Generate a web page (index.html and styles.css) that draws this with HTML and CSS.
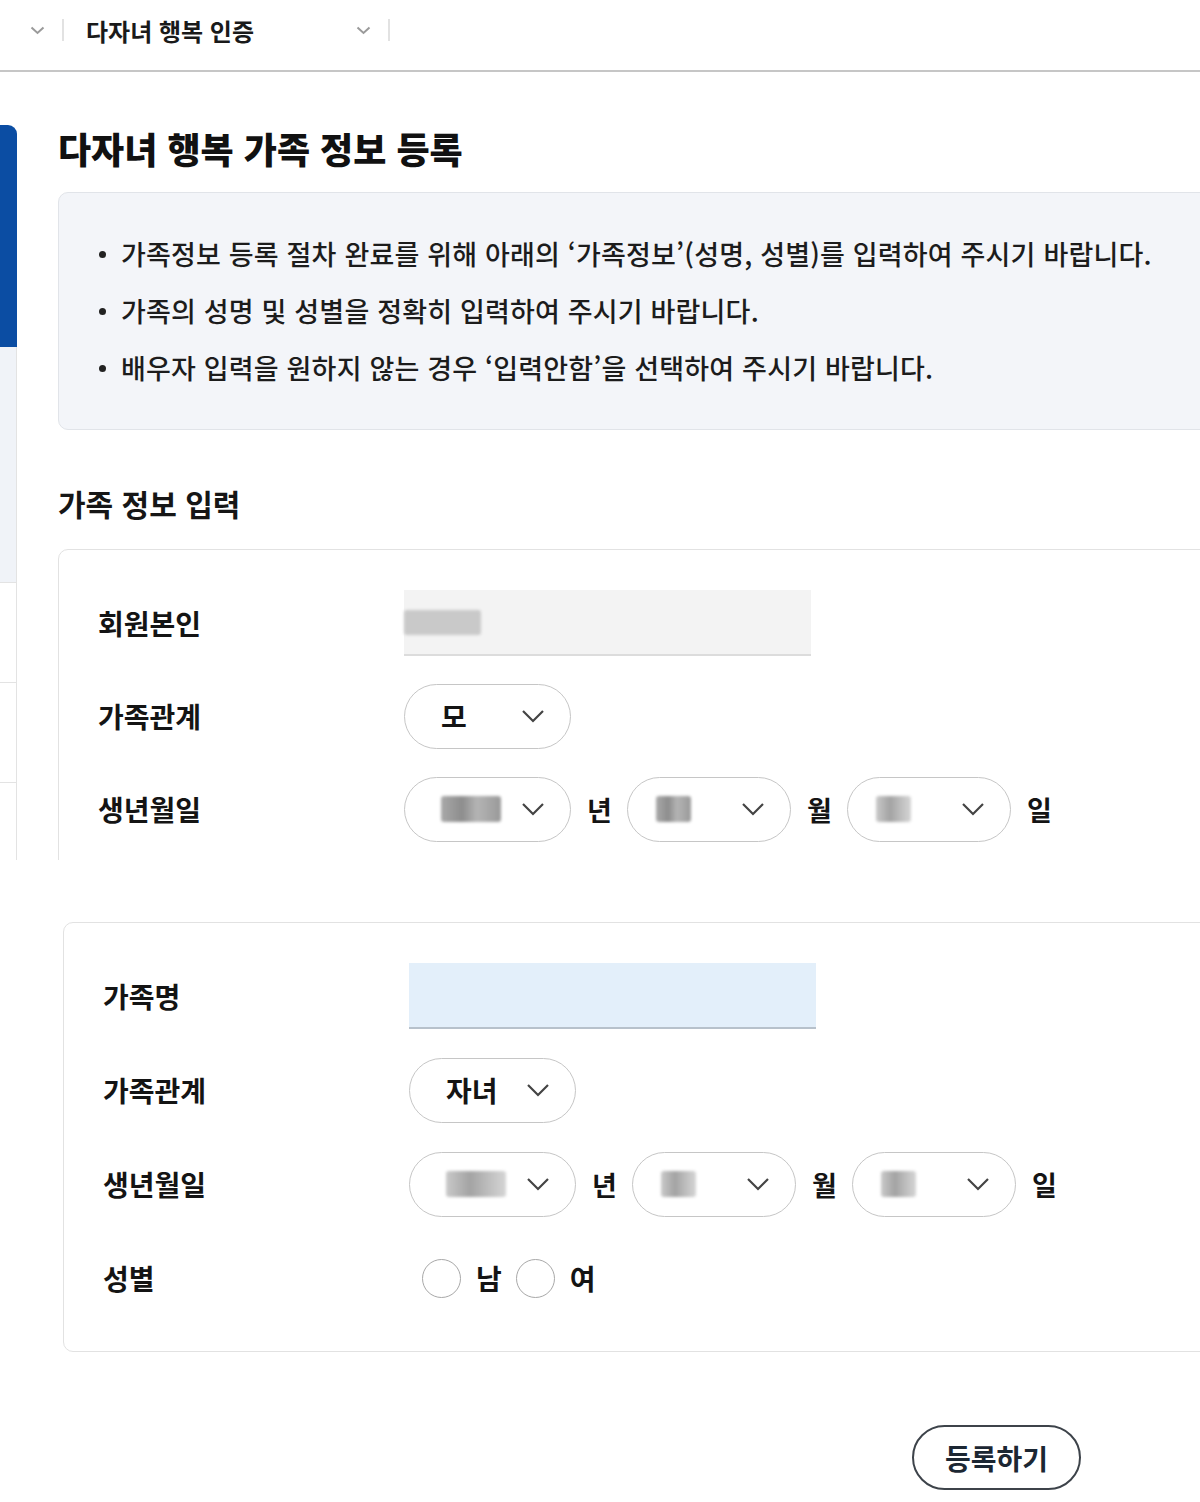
FILE: index.html
```html
<!DOCTYPE html>
<html lang="ko">
<head>
<meta charset="utf-8">
<title>다자녀 행복 가족 정보 등록</title>
<link rel="stylesheet" href="styles.css">
</head>
<body>
<div class="page">
  <div class="top">
    <header class="gnb">
      <span class="gnb-chev"><svg width="15" height="9" viewBox="0 0 15 9"><polyline points="1.5,1.5 7.5,7 13.5,1.5" fill="none" stroke="#9a9a9a" stroke-width="2"/></svg></span>
      <span class="gnb-div"></span>
      <span class="gnb-title">다자녀 행복 인증</span>
      <span class="gnb-chev"><svg width="15" height="9" viewBox="0 0 15 9"><polyline points="1.5,1.5 7.5,7 13.5,1.5" fill="none" stroke="#9a9a9a" stroke-width="2"/></svg></span>
      <span class="gnb-div"></span>
    </header>
    <div class="main">
      <nav class="side">
        <div class="side-gap"></div>
        <div class="side-item active"></div>
        <div class="side-item sub"></div>
        <div class="side-item"></div>
        <div class="side-item"></div>
        <div class="side-item last"></div>
      </nav>
      <section class="content">
        <h1 class="title">다자녀 행복 가족 정보 등록</h1>
        <div class="notice">
          <ul>
            <li>가족정보 등록 절차 완료를 위해 아래의 ‘가족정보’(성명, 성별)를 입력하여 주시기 바랍니다.</li>
            <li>가족의 성명 및 성별을 정확히 입력하여 주시기 바랍니다.</li>
            <li>배우자 입력을 원하지 않는 경우 ‘입력안함’을 선택하여 주시기 바랍니다.</li>
          </ul>
        </div>
        <h2 class="subtitle">가족 정보 입력</h2>
        <div class="card">
          <div class="row">
            <span class="label">회원본인</span>
            <div class="field readonly"><span class="blur name"></span></div>
          </div>
          <div class="row">
            <span class="label">가족관계</span>
            <div class="select"><span class="val">모</span><svg class="chev" width="24" height="14" viewBox="0 0 24 14"><polyline points="2,2 12,12 22,2" fill="none" stroke="#444" stroke-width="2.2"/></svg></div>
          </div>
          <div class="row">
            <span class="label">생년월일</span>
            <div class="date">
              <div class="select"><span class="blur yr"></span><svg class="chev" width="24" height="14" viewBox="0 0 24 14"><polyline points="2,2 12,12 22,2" fill="none" stroke="#444" stroke-width="2.2"/></svg></div>
              <span class="unit">년</span>
              <div class="select narrow"><span class="blur md"></span><svg class="chev" width="24" height="14" viewBox="0 0 24 14"><polyline points="2,2 12,12 22,2" fill="none" stroke="#444" stroke-width="2.2"/></svg></div>
              <span class="unit">월</span>
              <div class="select narrow"><span class="blur md light"></span><svg class="chev" width="24" height="14" viewBox="0 0 24 14"><polyline points="2,2 12,12 22,2" fill="none" stroke="#444" stroke-width="2.2"/></svg></div>
              <span class="unit">일</span>
            </div>
          </div>
        </div>
      </section>
    </div>
  </div>

  <div class="bottom">
    <div class="card">
      <div class="row">
        <span class="label">가족명</span>
        <div class="field active"></div>
      </div>
      <div class="row">
        <span class="label">가족관계</span>
        <div class="select"><span class="val">자녀</span><svg class="chev" width="24" height="14" viewBox="0 0 24 14"><polyline points="2,2 12,12 22,2" fill="none" stroke="#444" stroke-width="2.2"/></svg></div>
      </div>
      <div class="row">
        <span class="label">생년월일</span>
        <div class="date">
          <div class="select"><span class="blur yr light"></span><svg class="chev" width="24" height="14" viewBox="0 0 24 14"><polyline points="2,2 12,12 22,2" fill="none" stroke="#444" stroke-width="2.2"/></svg></div>
          <span class="unit">년</span>
          <div class="select narrow"><span class="blur md light"></span><svg class="chev" width="24" height="14" viewBox="0 0 24 14"><polyline points="2,2 12,12 22,2" fill="none" stroke="#444" stroke-width="2.2"/></svg></div>
          <span class="unit">월</span>
          <div class="select narrow"><span class="blur md light"></span><svg class="chev" width="24" height="14" viewBox="0 0 24 14"><polyline points="2,2 12,12 22,2" fill="none" stroke="#444" stroke-width="2.2"/></svg></div>
          <span class="unit">일</span>
        </div>
      </div>
      <div class="row">
        <span class="label">성별</span>
        <div class="radios">
          <label class="radio"><span class="circle"></span><span class="rtext">남</span></label>
          <label class="radio"><span class="circle"></span><span class="rtext">여</span></label>
        </div>
      </div>
    </div>
    <div class="btn-row">
      <button class="btn" type="button">등록하기</button>
    </div>
  </div>
</div>
</body>
</html>
```

FILE: styles.css
```css
* { box-sizing: border-box; }
html, body { margin: 0; padding: 0; background: #fff; }
body {
  font-family: "Noto Sans CJK KR", "Noto Sans", sans-serif;
  color: #161616;
  overflow: hidden;
}
.page { width: 1200px; overflow: hidden; }

/* top half */
.top { height: 860px; overflow: hidden; }
.gnb {
  height: 72px;
  border-bottom: 2px solid #c6c6c6;
  display: flex;
  align-items: center;
  padding: 0 0 10px 30px;
}
.gnb-chev { display: flex; width: 15px; }
.gnb-div { width: 2px; height: 22px; background: #e2e2e2; margin: 0 22px 0 17px; }
.gnb-title {
  width: 270px;
  font-size: 24px;
  font-weight: 700;
  color: #1a1a1a;
}

.main { display: flex; height: 788px; }
.side {
  width: 17px;
  flex: none;
  display: flex;
  flex-direction: column;
}
.side-gap { height: 53px; }
.side-item { height: 100px; border-right: 1px solid #e3e3e3; border-bottom: 1px solid #e3e3e3; }
.side-item.active {
  height: 222px;
  background: #0b4da3;
  border: none;
  border-top-right-radius: 9px;
}
.side-item.sub { height: 236px; background: #f0f3f8; }
.side-item.last { flex: 1; border-bottom: none; }

.content {
  flex: none;
  width: 1300px;
  padding-left: 41px;
}
.title {
  margin: 54px 0 0;
  font-size: 36px;
  line-height: 44px;
  font-weight: 900;
  color: #111;
}
.notice {
  margin-top: 22px;
  height: 238px;
  background: #f3f5f9;
  border: 1px solid #e1e4e9;
  border-radius: 10px;
  padding: 32px 0 0 40px;
}
.notice ul { margin: 0; padding: 0; list-style: none; }
.notice li {
  position: relative;
  padding-left: 22px;
  font-size: 27px;
  line-height: 57px;
  font-weight: 500;
  letter-spacing: 0.18px;
  color: #1c1c1c;
  white-space: nowrap;
}
.notice li::before {
  content: "";
  position: absolute;
  left: 0;
  top: 26px;
  width: 7px;
  height: 7px;
  border-radius: 50%;
  background: #222;
}
.subtitle {
  margin: 53px 0 0;
  font-size: 30px;
  line-height: 40px;
  font-weight: 700;
  color: #161616;
}

/* card */
.card {
  margin-top: 26px;
  border: 1px solid #e2e2e2;
  border-radius: 10px;
  padding: 40px 39px;
  display: flex;
  flex-direction: column;
  gap: 27px;
}
.row { display: flex; align-items: center; height: 66px; }
.label {
  width: 306px;
  flex: none;
  font-size: 28px;
  font-weight: 700;
  color: #141414;
}
.field {
  width: 407px;
  height: 66px;
  background: #f3f3f3;
  border-bottom: 2px solid #dcdcdc;
  display: flex;
  align-items: center;
}
.field.active { background: #e3effa; border-bottom-color: #b7c1cb; }

.blur {
  display: block;
  background: linear-gradient(90deg, #a9a9a9 0%, #8d8d8d 35%, #b4b4b4 60%, #999 100%);
  filter: blur(1.5px);
  border-radius: 3px;
}
.blur.light { background: linear-gradient(90deg, #c9c9c9 0%, #a3a3a3 40%, #bdbdbd 70%, #d5d5d5 100%); }
.blur.name { width: 77px; height: 25px; background: #c9c9c9; }
.blur.yr { width: 60px; height: 26px; }
.blur.md { width: 35px; height: 26px; }

.date { display: flex; align-items: center; gap: 16px; }
.select {
  width: 167px;
  height: 65px;
  border: 1.5px solid #c6c6c6;
  border-radius: 33px;
  display: flex;
  align-items: center;
  justify-content: space-between;
  padding: 0 25px 0 36px;
  background: #fff;
}
.select.narrow { width: 164px; padding-left: 28px; }
.val { font-size: 28px; font-weight: 700; color: #141414; }
.unit { width: 24px; font-size: 27px; font-weight: 700; color: #141414; }

/* bottom half */
.bottom { width: 1300px; padding-left: 63px; }
.bottom .card { margin-top: 62px; gap: 28px; }
.radios { display: flex; align-items: center; gap: 14px; padding-left: 13px; }
.radio { display: flex; align-items: center; gap: 15px; }
.circle {
  width: 39px;
  height: 39px;
  border: 1.5px solid #a8a8a8;
  border-radius: 50%;
  background: #fff;
}
.rtext { font-size: 28px; font-weight: 700; color: #141414; }

.btn-row { padding: 73px 0 0 849px; }
.btn {
  width: 169px;
  height: 65px;
  border: 2px solid #3d434a;
  border-radius: 33px;
  background: #fff;
  font-family: "Noto Sans CJK KR", sans-serif;
  font-size: 28px;
  font-weight: 700;
  color: #1c2733;
  padding: 0;
}
```
